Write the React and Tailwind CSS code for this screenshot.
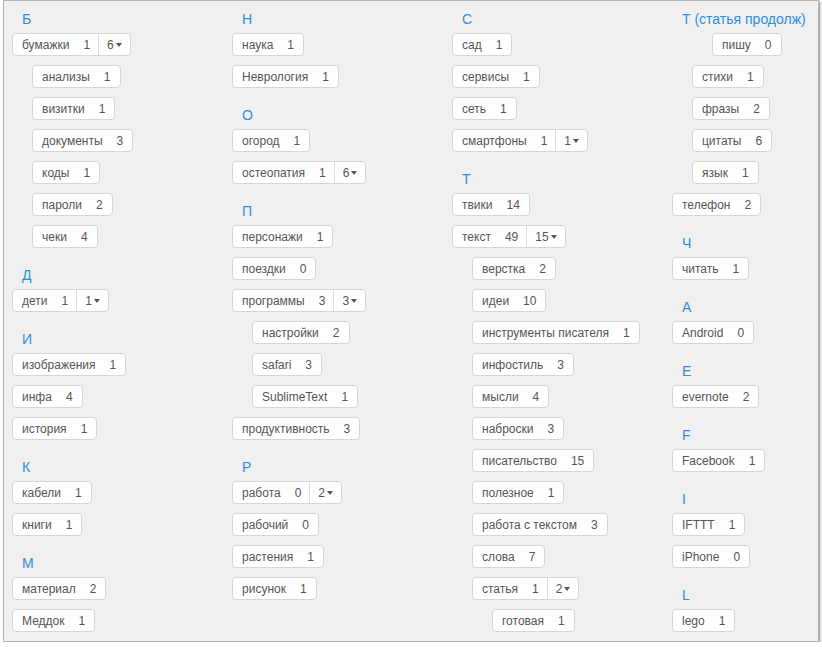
import React from "react";

// tag columns: each group is a letter header + list of tags
// indent: 0 / 1 / 2 levels, sub: count in the dropdown part of a split tag
const columns = [
  [
    {
      letter: "Б",
      tags: [
        { name: "бумажки", count: 1, sub: 6 },
        { name: "анализы", count: 1, indent: 1 },
        { name: "визитки", count: 1, indent: 1 },
        { name: "документы", count: 3, indent: 1 },
        { name: "коды", count: 1, indent: 1 },
        { name: "пароли", count: 2, indent: 1 },
        { name: "чеки", count: 4, indent: 1 },
      ],
    },
    { letter: "Д", tags: [{ name: "дети", count: 1, sub: 1 }] },
    {
      letter: "И",
      tags: [
        { name: "изображения", count: 1 },
        { name: "инфа", count: 4 },
        { name: "история", count: 1 },
      ],
    },
    {
      letter: "К",
      tags: [
        { name: "кабели", count: 1 },
        { name: "книги", count: 1 },
      ],
    },
    {
      letter: "М",
      tags: [
        { name: "материал", count: 2 },
        { name: "Меддок", count: 1 },
      ],
    },
  ],
  [
    {
      letter: "Н",
      tags: [
        { name: "наука", count: 1 },
        { name: "Неврология", count: 1 },
      ],
    },
    {
      letter: "О",
      tags: [
        { name: "огород", count: 1 },
        { name: "остеопатия", count: 1, sub: 6 },
      ],
    },
    {
      letter: "П",
      tags: [
        { name: "персонажи", count: 1 },
        { name: "поездки", count: 0 },
        { name: "программы", count: 3, sub: 3 },
        { name: "настройки", count: 2, indent: 1 },
        { name: "safari", count: 3, indent: 1 },
        { name: "SublimeText", count: 1, indent: 1 },
        { name: "продуктивность", count: 3 },
      ],
    },
    {
      letter: "Р",
      tags: [
        { name: "работа", count: 0, sub: 2 },
        { name: "рабочий", count: 0 },
        { name: "растения", count: 1 },
        { name: "рисунок", count: 1 },
      ],
    },
  ],
  [
    {
      letter: "С",
      tags: [
        { name: "сад", count: 1 },
        { name: "сервисы", count: 1 },
        { name: "сеть", count: 1 },
        { name: "смартфоны", count: 1, sub: 1 },
      ],
    },
    {
      letter: "Т",
      tags: [
        { name: "твики", count: 14 },
        { name: "текст", count: 49, sub: 15 },
        { name: "верстка", count: 2, indent: 1 },
        { name: "идеи", count: 10, indent: 1 },
        { name: "инструменты писателя", count: 1, indent: 1 },
        { name: "инфостиль", count: 3, indent: 1 },
        { name: "мысли", count: 4, indent: 1 },
        { name: "наброски", count: 3, indent: 1 },
        { name: "писательство", count: 15, indent: 1 },
        { name: "полезное", count: 1, indent: 1 },
        { name: "работа с текстом", count: 3, indent: 1 },
        { name: "слова", count: 7, indent: 1 },
        { name: "статья", count: 1, sub: 2, indent: 1 },
        { name: "готовая", count: 1, indent: 2 },
      ],
    },
  ],
  [
    {
      letter: "Т (статья продолж)",
      tags: [
        { name: "пишу", count: 0, indent: 2 },
        { name: "стихи", count: 1, indent: 1 },
        { name: "фразы", count: 2, indent: 1 },
        { name: "цитаты", count: 6, indent: 1 },
        { name: "язык", count: 1, indent: 1 },
        { name: "телефон", count: 2 },
      ],
    },
    { letter: "Ч", tags: [{ name: "читать", count: 1 }] },
    { letter: "A", tags: [{ name: "Android", count: 0 }] },
    { letter: "E", tags: [{ name: "evernote", count: 2 }] },
    { letter: "F", tags: [{ name: "Facebook", count: 1 }] },
    {
      letter: "I",
      tags: [
        { name: "IFTTT", count: 1 },
        { name: "iPhone", count: 0 },
      ],
    },
    { letter: "L", tags: [{ name: "lego", count: 1 }] },
  ],
];

const indents = ["ml-0", "ml-[20px]", "ml-[40px]"];

function Tag({ tag }) {
  const split = tag.sub != null;
  return (
    <div className={"flex mb-[9px] " + indents[tag.indent || 0]}>
      <div className="flex h-[23px] items-center rounded-[4px] border border-[#d6d6d6] bg-white text-[12px] text-[#555]">
        <span className={"flex items-center pl-[9px] " + (split ? "pr-[8px]" : "pr-[9px]")}>
          {tag.name}
          <span className="ml-[14px]">{tag.count}</span>
        </span>
        {split && (
          <span className="flex h-full items-center border-l border-[#dcdcdc] pl-[8px] pr-[8px]">
            {tag.sub}
            <span className="ml-[2px] mt-[1px] h-0 w-0 border-x-[3px] border-t-[4px] border-x-transparent border-t-[#555]"></span>
          </span>
        )}
      </div>
    </div>
  );
}

export default function App() {
  return (
    <div className="bg-white pl-[3px] font-['Liberation_Sans',Arial,sans-serif]">
      <div className="h-[642px] w-[816px] overflow-hidden border border-[#b4b4b4] bg-[#f0f0f0] pl-[8px] shadow-[1px_1px_2px_rgba(0,0,0,0.45)]">
        <div className="flex">
          {columns.map((col, ci) => (
            <div key={ci} className="w-[220px] shrink-0">
              {col.map((group) => (
                <div key={group.letter}>
                  <div className="whitespace-nowrap pl-[10px] pt-[10px] pb-[6px] text-[14px] leading-[16px] text-[#2b8fdf]">
                    {group.letter}
                  </div>
                  {group.tags.map((tag, i) => (
                    <Tag key={i} tag={tag} />
                  ))}
                </div>
              ))}
            </div>
          ))}
        </div>
      </div>
    </div>
  );
}
